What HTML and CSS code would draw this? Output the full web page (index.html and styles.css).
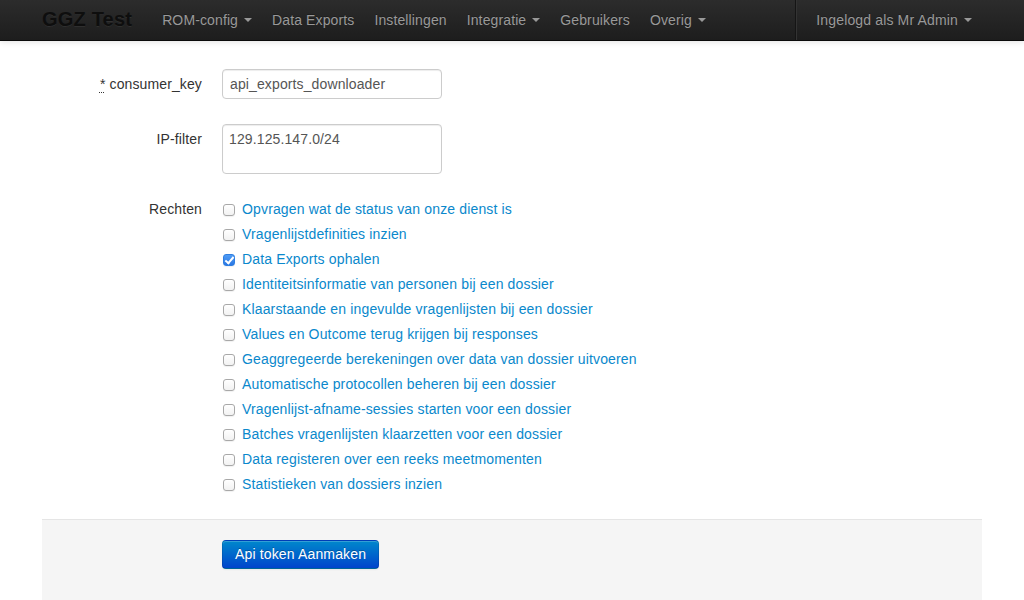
FILE: index.html
```html
<!DOCTYPE html>
<html lang="nl">
<head>
<meta charset="utf-8">
<title>GGZ Test</title>
<link rel="stylesheet" href="styles.css">
</head>
<body>
<header class="navbar">
  <div class="nav-inner">
    <a class="brand" href="#">GGZ Test</a>
    <ul class="nav">
      <li><a href="#">ROM-config <span class="caret"></span></a></li>
      <li><a href="#">Data Exports</a></li>
      <li><a href="#">Instellingen</a></li>
      <li><a href="#">Integratie <span class="caret"></span></a></li>
      <li><a href="#">Gebruikers</a></li>
      <li><a href="#">Overig <span class="caret"></span></a></li>
    </ul>
    <ul class="nav nav-right">
      <li class="divider-vertical"></li>
      <li><a href="#">Ingelogd als Mr Admin <span class="caret"></span></a></li>
    </ul>
  </div>
</header>
<main class="container">
  <form class="form-horizontal">
    <div class="control-group first">
      <label class="control-label"><abbr title="verplicht">*</abbr> consumer_key</label>
      <div class="controls">
        <input class="text-input" type="text" value="api_exports_downloader">
      </div>
    </div>
    <div class="control-group">
      <label class="control-label">IP-filter</label>
      <div class="controls">
        <textarea class="text-area">129.125.147.0/24</textarea>
      </div>
    </div>
    <div class="control-group">
      <label class="control-label">Rechten</label>
      <div class="controls checks">
        <label class="checkbox"><input type="checkbox"><span>Opvragen wat de status van onze dienst is</span></label>
        <label class="checkbox"><input type="checkbox"><span>Vragenlijstdefinities inzien</span></label>
        <label class="checkbox"><input type="checkbox" checked><span>Data Exports ophalen</span></label>
        <label class="checkbox"><input type="checkbox"><span>Identiteitsinformatie van personen bij een dossier</span></label>
        <label class="checkbox"><input type="checkbox"><span>Klaarstaande en ingevulde vragenlijsten bij een dossier</span></label>
        <label class="checkbox"><input type="checkbox"><span>Values en Outcome terug krijgen bij responses</span></label>
        <label class="checkbox"><input type="checkbox"><span>Geaggregeerde berekeningen over data van dossier uitvoeren</span></label>
        <label class="checkbox"><input type="checkbox"><span>Automatische protocollen beheren bij een dossier</span></label>
        <label class="checkbox"><input type="checkbox"><span>Vragenlijst-afname-sessies starten voor een dossier</span></label>
        <label class="checkbox"><input type="checkbox"><span>Batches vragenlijsten klaarzetten voor een dossier</span></label>
        <label class="checkbox"><input type="checkbox"><span>Data registeren over een reeks meetmomenten</span></label>
        <label class="checkbox"><input type="checkbox"><span>Statistieken van dossiers inzien</span></label>
      </div>
    </div>
    <div class="form-actions">
      <button class="btn-primary" type="button">Api token Aanmaken</button>
    </div>
  </form>
</main>
</body>
</html>
```

FILE: styles.css
```css
* { box-sizing: border-box; }
html, body { margin: 0; padding: 0; }
body {
  font-family: "Liberation Sans", Arial, Helvetica, sans-serif;
  font-size: 14px;
  line-height: 20px;
  letter-spacing: 0.12px;
  color: #333;
  background: #fff;
  overflow: hidden;
}
a { text-decoration: none; }

.navbar {
  height: 41px;
  background: linear-gradient(to bottom, #2c2c2c, #1d1d1d);
  border-bottom: 1px solid #0a0a0a;
  box-shadow: 0 1px 6px rgba(0,0,0,0.12);
}
.nav-inner {
  width: 940px;
  margin: 0 auto;
  display: flex;
  height: 40px;
}
.brand {
  display: block;
  margin-left: -20px;
  padding: 9px 20px 11px;
  font-size: 20px;
  font-weight: bold;
  line-height: 20px;
  color: #0e0e0e;
  text-shadow: 0 1px 0 rgba(255,255,255,0.06);
  letter-spacing: 0.2px;
}
.nav {
  display: flex;
  list-style: none;
  margin: 0;
  padding: 0;
}
.nav li a {
  display: block;
  padding: 10px 10px 10px;
  color: #999;
  line-height: 20px;
  letter-spacing: 0.12px;
  text-shadow: 0 -1px 0 rgba(0,0,0,0.25);
}
.nav-right { margin-left: auto; }
.nav-right li a { letter-spacing: 0.15px; }
.divider-vertical {
  width: 2px;
  height: 40px;
  border-left: 1px solid #151515;
  border-right: 1px solid #333;
  margin-right: 9px;
}
.caret {
  display: inline-block;
  width: 0;
  height: 0;
  vertical-align: middle;
  margin-left: 2px;
  margin-top: -2px;
  border-top: 4px solid #999;
  border-left: 4px solid transparent;
  border-right: 4px solid transparent;
}

.container {
  width: 940px;
  margin: 0 auto;
  padding-top: 28px;
}
.control-group {
  display: flex;
  margin-bottom: 20px;
}
.control-group.first { margin-bottom: 25px; }
.control-label {
  width: 160px;
  text-align: right;
  padding-top: 5px;
  flex-shrink: 0;
}
.control-label abbr {
  text-decoration: underline dotted;
  text-underline-offset: 3px;
  text-decoration-thickness: 1px;
  cursor: help;
}
.controls { margin-left: 20px; }
.text-input, .text-area {
  width: 220px;
  font-family: inherit;
  font-size: 14px;
  line-height: 20px;
  letter-spacing: 0.12px;
  color: #555;
  border: 1px solid #ccc;
  border-radius: 4px;
  box-shadow: inset 0 1px 1px rgba(0,0,0,0.075);
  background: #fff;
  margin: 0;
}
.text-input {
  height: 30px;
  padding: 4px 7px;
  display: block;
}
.text-area {
  height: 50px;
  padding: 4px 6px;
  resize: none;
  display: block;
}
.checks {
  display: flex;
  flex-direction: column;
  padding-top: 5px;
}
.checkbox {
  display: flex;
  align-items: center;
  height: 20px;
  margin-bottom: 5px;
  color: #0a88cc;
  letter-spacing: 0.15px;
}
.checkbox input {
  appearance: none;
  -webkit-appearance: none;
  position: relative;
  width: 12px;
  height: 12px;
  margin: 2px 7px 0 1px;
  border: 1px solid #a8a8a8;
  border-radius: 3px;
  background: linear-gradient(to bottom, #fff, #f2f2f2);
  box-shadow: 0 1px 1px rgba(0,0,0,0.06);
  flex-shrink: 0;
}
.checkbox input:checked {
  border-color: #2f7ee0;
  background: linear-gradient(to bottom, #4f9cf5, #2a78e4);
}
.checkbox input:checked::after {
  content: "";
  position: absolute;
  left: 3px;
  top: 0px;
  width: 3px;
  height: 7px;
  border-right: 2px solid #fff;
  border-bottom: 2px solid #fff;
  transform: rotate(40deg);
}
.form-actions {
  margin-top: 5px;
  padding: 20px 180px 40px;
  background: #f5f5f5;
  border-top: 1px solid #e5e5e5;
}
.btn-primary {
  display: block;
  height: 29px;
  padding: 4px 12px;
  font-family: inherit;
  font-size: 14px;
  line-height: 19px;
  letter-spacing: 0.15px;
  color: #fff;
  text-shadow: 0 -1px 0 rgba(0,0,0,0.25);
  background: linear-gradient(to bottom, #0088cc, #0044cc);
  border: 1px solid #0044aa;
  border-color: rgba(0,0,0,0.1) rgba(0,0,0,0.1) rgba(0,0,0,0.25);
  border-radius: 4px;
  box-shadow: inset 0 1px 0 rgba(255,255,255,0.2), 0 1px 2px rgba(0,0,0,0.05);
  cursor: pointer;
}
```
